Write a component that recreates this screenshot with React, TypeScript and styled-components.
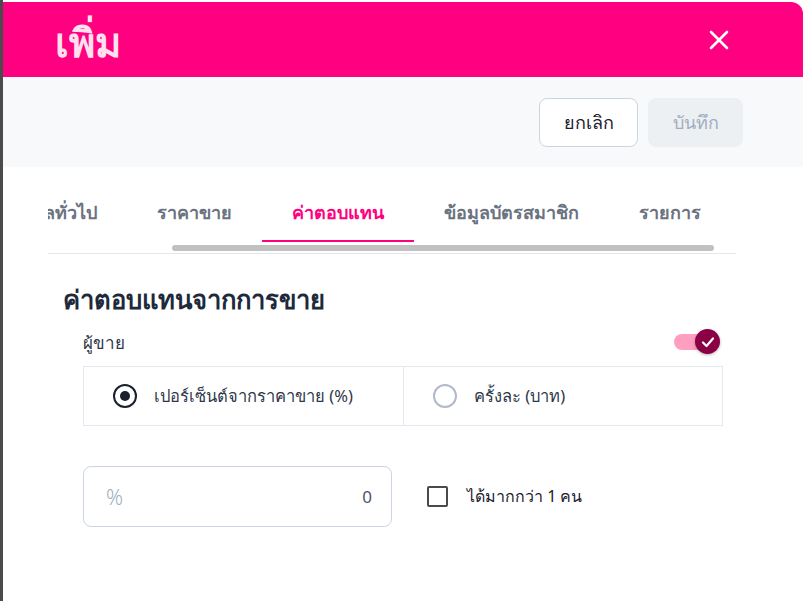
import React from 'react';
import styled, { createGlobalStyle } from 'styled-components';

const GlobalStyle = createGlobalStyle`
    html, body {
        margin: 0;
        padding: 0;
        background: #ffffff;
        font-family: "Noto Sans", "Liberation Sans", sans-serif;
    }
`

const Page = styled.div`
    display: flex;
    width: 803px;
    height: 601px;
    overflow: hidden;
    background: #ffffff;
`

const Backdrop = styled.div`
    width: 3px;
    flex-shrink: 0;
    background: #4b4b4b;
`

const Drawer = styled.div`
    flex: 1;
    display: flex;
    flex-direction: column;
    margin-top: 2px;
    background: #ffffff;
    border-top-right-radius: 12px;
    overflow: hidden;
`

const Header = styled.div`
    height: 75px;
    background: #ff0080;
    display: flex;
    align-items: center;
    justify-content: space-between;
    padding: 0 72px 0 52px;
`

const Title = styled.h1`
    margin: 0;
    font-size: 40px;
    font-weight: 600;
    color: #ffe0ef;
    line-height: 1;
    padding-top: 4px;
`

const CloseButton = styled.button`
    border: none;
    background: none;
    padding: 0;
    width: 24px;
    height: 24px;
    display: flex;
    align-items: center;
    justify-content: center;
    cursor: pointer;
`

const Toolbar = styled.div`
    height: 90px;
    background: #f8f9fb;
    display: flex;
    align-items: center;
    justify-content: flex-end;
    gap: 10px;
    padding-right: 60px;
`

const ActionButton = styled.button<{ $disabled?: boolean }>`
    height: 49px;
    width: ${props => props.$disabled ? '95px' : '99px'};
    padding: 0;
    border-radius: 8px;
    font-family: inherit;
    font-size: 18px;
    font-weight: 500;
    border: 1px solid ${props => props.$disabled ? '#edf0f3' : '#cbd5e1'};
    background: ${props => props.$disabled ? '#edf0f3' : '#ffffff'};
    color: ${props => props.$disabled ? '#a0aec0' : '#1a202c'};
    margin-top: 1px;
`

const Body = styled.div`
    padding: 0 67px 0 45px;
`

const TabScroller = styled.div`
    margin-top: 14px;
    overflow-x: auto;
    scrollbar-width: none;

    &::-webkit-scrollbar {
        display: none;
    }
`

const TabList = styled.div`
    display: flex;
    width: max-content;
    padding: 0 33px 0 89px;
`

const Tab = styled.div<{ $active?: boolean }>`
    padding: 17px 30px 13px;
    font-size: 18px;
    font-weight: 600;
    white-space: nowrap;
    color: ${props => props.$active ? '#ff0080' : '#6b7280'};
    border-bottom: 2px solid ${props => props.$active ? '#ff0080' : 'transparent'};
`

const ScrollTrack = styled.div`
    position: relative;
    height: 6px;
    margin-top: 3px;
    margin-bottom: 2px;
`

const ScrollThumb = styled.div`
    position: absolute;
    top: 0;
    height: 6px;
    border-radius: 3px;
    background: #c1c1c1;
`

const Divider = styled.div`
    height: 1px;
    background: #e5e7eb;
`

const Section = styled.div`
    padding: 0 0 0 15px;
`

const Heading = styled.h2`
    margin: 26px 0 0;
    font-size: 25.6px;
    font-weight: 700;
    color: #1e293b;
`

const Group = styled.div`
    padding: 0 13px 0 20px;
`

const LabelRow = styled.div`
    display: flex;
    align-items: center;
    justify-content: space-between;
    margin-top: 8px;
    height: 28px;
`

const FieldLabel = styled.span`
    font-size: 17px;
    color: #2d3748;
`

const Switch = styled.div`
    position: relative;
    width: 46px;
    height: 26px;
    margin-right: 3px;
    display: flex;
    align-items: center;
`

const SwitchTrack = styled.div`
    width: 36px;
    height: 16px;
    border-radius: 8px;
    background: #ff9fbf;
`

const SwitchKnob = styled.div`
    position: absolute;
    right: 0;
    top: 0;
    width: 25px;
    height: 25px;
    border-radius: 50%;
    background: #8b0045;
    display: flex;
    align-items: center;
    justify-content: center;
    box-shadow: 0 1px 3px rgba(0, 0, 0, 0.3);
`

const RadioGroup = styled.div`
    display: grid;
    grid-template-columns: 1fr 1fr;
    border: 1px solid #e2e8f0;
    margin-top: 10px;
    height: 58px;
`

const RadioOption = styled.label`
    display: flex;
    align-items: center;
    gap: 17px;
    padding-left: 29px;
    font-size: 16.5px;
    color: #2d3748;

    & + & {
        border-left: 1px solid #e2e8f0;
    }
`

const RadioCircle = styled.span<{ $checked?: boolean }>`
    width: 24px;
    height: 24px;
    box-sizing: border-box;
    border-radius: 50%;
    border: 2px solid ${props => props.$checked ? '#1a202c' : '#b0bac8'};
    display: flex;
    align-items: center;
    justify-content: center;

    &::after {
        content: '';
        width: 10px;
        height: 10px;
        border-radius: 50%;
        background: ${props => props.$checked ? '#1a202c' : 'transparent'};
    }
`

const InputRow = styled.div`
    display: flex;
    align-items: center;
    gap: 35px;
    margin-top: 40px;
`

const InputBox = styled.div`
    width: 309px;
    height: 61px;
    box-sizing: border-box;
    border: 1px solid #cbd5e1;
    border-radius: 8px;
    display: flex;
    align-items: center;
    justify-content: space-between;
    padding: 0 19px 0 22px;
`

const Adornment = styled.span`
    font-size: 21px;
    color: #a0aec0;
    font-weight: 300;
`

const InputValue = styled.span`
    font-size: 17px;
    color: #4a5568;
`

const CheckRow = styled.label`
    display: flex;
    align-items: center;
    gap: 19px;
    font-size: 16px;
    color: #1a202c;
`

const CheckBox = styled.span`
    width: 21px;
    height: 21px;
    box-sizing: border-box;
    border: 2px solid #4a4a4a;
    border-radius: 2px;
`

const tabs = ['ข้อมูลทั่วไป', 'ราคาขาย', 'ค่าตอบแทน', 'ข้อมูลบัตรสมาชิก', 'รายการ'];

function App() {
    const scrollRef = React.useRef<HTMLDivElement>(null);
    const firstTab = React.useRef<HTMLDivElement>(null);
    const [thumb, setThumb] = React.useState({ left: 0, width: 0 });

    React.useLayoutEffect(() => {
        const el = scrollRef.current;
        const first = firstTab.current;
        if (el && first) {
            // keep the end of the first tab 79px into the strip
            el.scrollLeft = 89 + first.offsetWidth - 79;
            const ratio = el.clientWidth / el.scrollWidth;
            setThumb({ left: el.scrollLeft * ratio, width: el.clientWidth * ratio });
        }
    }, []);

    return (
        <Page>
            <GlobalStyle />
            <Backdrop />
            <Drawer>
                <Header>
                    <Title>เพิ่ม</Title>
                    <CloseButton>
                        <svg width="20" height="20" viewBox="0 0 20 20">
                            <path d="M2 2 L18 18 M18 2 L2 18" stroke="#ffffff" strokeWidth="2.6" strokeLinecap="round" />
                        </svg>
                    </CloseButton>
                </Header>
                <Toolbar>
                    <ActionButton>ยกเลิก</ActionButton>
                    <ActionButton $disabled>บันทึก</ActionButton>
                </Toolbar>
                <Body>
                    <TabScroller ref={scrollRef}>
                        <TabList>
                            {tabs.map((t, i) => (
                                <Tab key={t} ref={i === 0 ? firstTab : undefined} $active={i === 2}>{t}</Tab>
                            ))}
                        </TabList>
                    </TabScroller>
                    <ScrollTrack>
                        <ScrollThumb style={{ left: thumb.left, width: thumb.width }} />
                    </ScrollTrack>
                    <Divider />
                    <Section>
                        <Heading>ค่าตอบแทนจากการขาย</Heading>
                        <Group>
                            <LabelRow>
                                <FieldLabel>ผู้ขาย</FieldLabel>
                                <Switch>
                                    <SwitchTrack />
                                    <SwitchKnob>
                                        <svg width="14" height="14" viewBox="0 0 14 14">
                                            <path d="M2 7.5 L5.5 11 L12 3.5" stroke="#ffffff" strokeWidth="2.2" fill="none" strokeLinecap="round" strokeLinejoin="round" />
                                        </svg>
                                    </SwitchKnob>
                                </Switch>
                            </LabelRow>
                            <RadioGroup>
                                <RadioOption>
                                    <RadioCircle $checked />
                                    เปอร์เซ็นต์จากราคาขาย (%)
                                </RadioOption>
                                <RadioOption>
                                    <RadioCircle />
                                    ครั้งละ (บาท)
                                </RadioOption>
                            </RadioGroup>
                            <InputRow>
                                <InputBox>
                                    <Adornment>%</Adornment>
                                    <InputValue>0</InputValue>
                                </InputBox>
                                <CheckRow>
                                    <CheckBox />
                                    ได้มากกว่า 1 คน
                                </CheckRow>
                            </InputRow>
                        </Group>
                    </Section>
                </Body>
            </Drawer>
        </Page>
    );
}

export default App;
